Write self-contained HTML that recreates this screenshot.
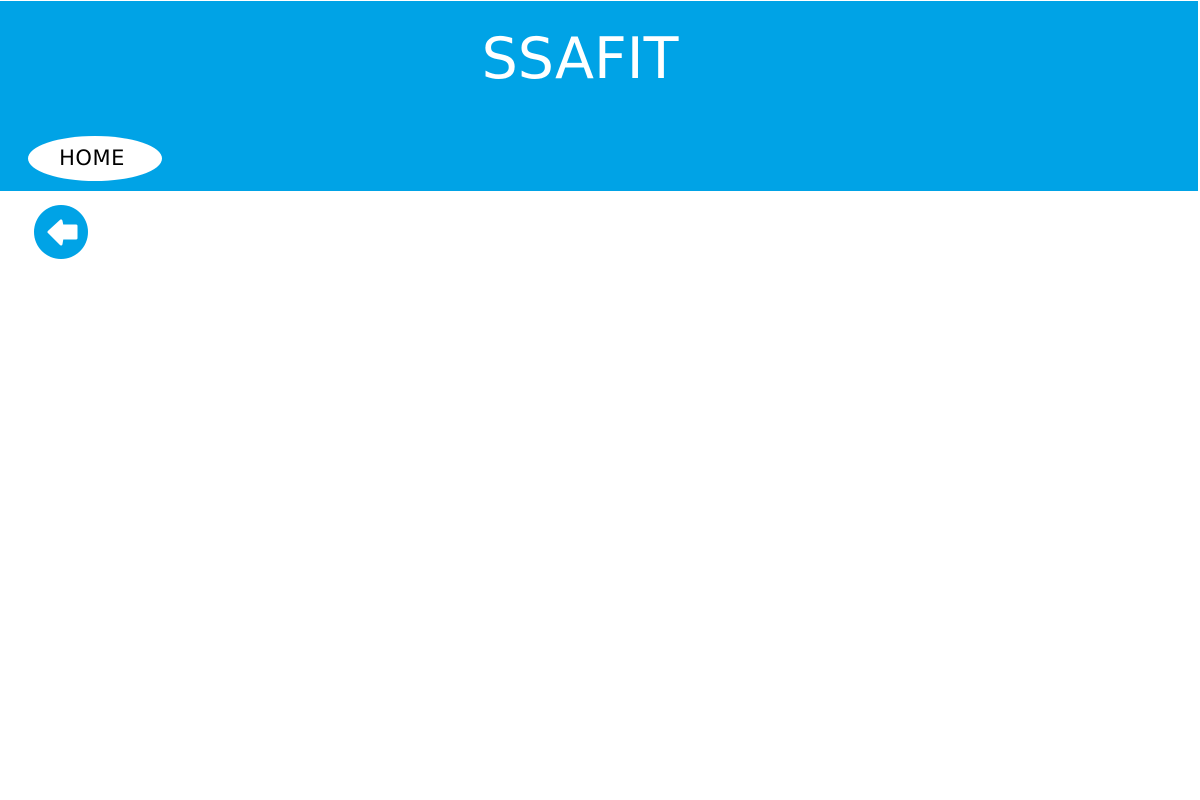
<!DOCTYPE html>
<html><head><style>
body{margin:0;width:1200px;height:800px;background:#fff;position:relative;overflow:hidden;font-family:"DejaVu Sans","Liberation Sans",sans-serif}
.hdr{position:absolute;left:0;top:1px;width:1198px;height:190px;background:#00a3e6}
.t{position:absolute;left:0;width:1160px;top:24px;text-align:center;color:#fff;font-size:57px;line-height:70px}
.home{position:absolute;left:28px;top:136px;width:134px;height:45px;border-radius:50%;background:#fff;color:#000;font-size:21px;line-height:44px;text-align:center;box-sizing:border-box;padding-right:6px;letter-spacing:0.5px}
</style></head><body>
<div class="hdr"></div>
<div class="t">SSAFIT</div>
<div class="home">HOME</div>
<svg style="position:absolute;left:33px;top:204px" width="56" height="56" viewBox="0 0 56 56">
<circle cx="28" cy="28" r="27" fill="#00a3e6"/>
<path d="M16 28 L28 17 L29 22 L43 22 L43 34 L29 34 L28 40 Z" fill="#fff" stroke="#fff" stroke-width="3" stroke-linejoin="round"/>
</svg>
</body></html>
